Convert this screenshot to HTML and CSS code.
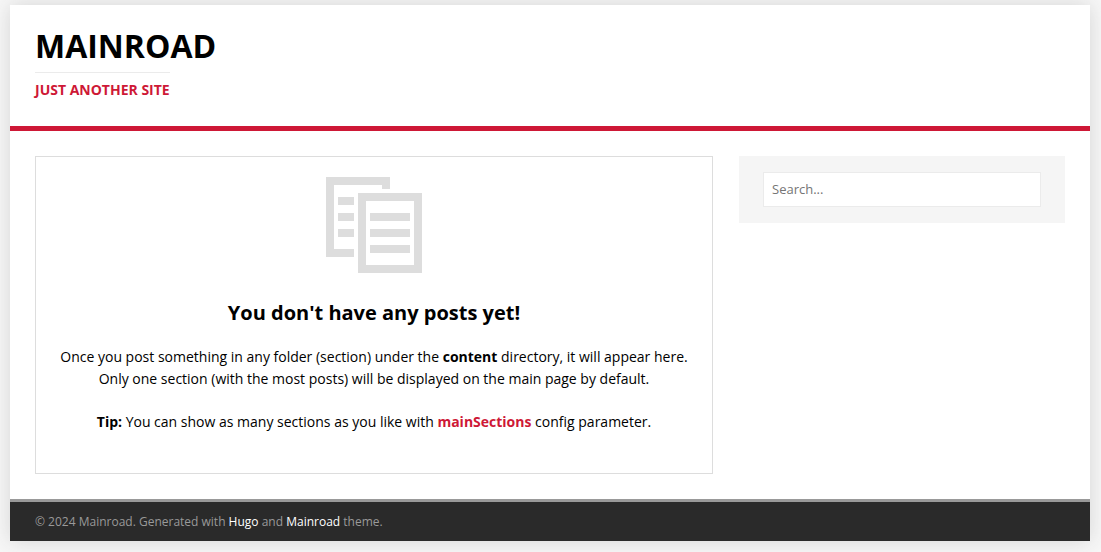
FILE: index.html
```
<!DOCTYPE html>
<html lang="en">
<head>
<meta charset="utf-8">
<meta name="viewport" content="width=device-width, initial-scale=1">
<title>Mainroad</title>
<link rel="stylesheet" href="styles.css">
</head>
<body>
<div class="container">
  <header class="header">
    <a class="logo" href="#">
      <span class="logo-title">Mainroad</span>
      <span class="logo-tagline">Just another site</span>
    </a>
  </header>
  <div class="wrapper">
    <main class="warning">
      <svg class="warning-icon" viewBox="0 0 96 96" width="96" height="96" aria-hidden="true">
        <path d="M0 0h64v12h-8V8H8v64h20v8H0z"/>
        <path d="M12 20h16v8H12zM12 36h16v8H12zM12 52h16v8H12z"/>
        <path fill-rule="evenodd" d="M32 16h64v80H32zM40 24v64h48V24z"/>
        <path d="M44 36h40v8H44zM44 52h40v8H44zM44 68h40v8H44z"/>
      </svg>
      <h2 class="warning-title">You don't have any posts yet!</h2>
      <p class="warning-text">Once you post something in any folder (section) under the <b>content</b> directory, it will appear here.<br>Only one section (with the most posts) will be displayed on the main page by default.</p>
      <p class="warning-text"><b>Tip:</b> You can show as many sections as you like with <a class="warning-link" href="#">mainSections</a> config parameter.</p>
    </main>
    <aside class="sidebar">
      <form class="search" role="search">
        <input class="search-input" type="search" placeholder="Search..." aria-label="Search">
      </form>
    </aside>
  </div>
  <footer class="footer">© 2024 Mainroad. Generated with <a class="footer-link" href="#">Hugo</a> and <a class="footer-link" href="#">Mainroad</a> theme.</footer>
</div>
</body>
</html>
```
FILE: styles.css
```
* {
  box-sizing: border-box;
}

body {
  margin: 0;
  padding: 5px 11px 11px 10px;
  background: #f7f7f7;
  color: #000;
  font: 14px/22px "Open Sans", "Liberation Sans", sans-serif;
}

a {
  text-decoration: none;
}

.container {
  max-width: 1080px;
  margin: 0 auto;
  background: #fff;
  box-shadow: 0 0 20px rgba(50, 50, 50, 0.17);
}

.header {
  padding: 25px;
  border-bottom: 5px solid #ce1836;
}

.logo {
  display: flex;
  flex-direction: column;
  align-items: flex-start;
  font-weight: 700;
  text-transform: uppercase;
}

.logo-title {
  margin-bottom: 10px;
  color: #000;
  font-size: 32px;
  line-height: 32px;
}

.logo-tagline {
  padding-top: 6px;
  border-top: 1px solid #ebebeb;
  color: #ce1836;
}

.wrapper {
  display: grid;
  grid-template-columns: 678fr 326fr;
  align-items: start;
  gap: 26px;
  padding: 25px;
}

.warning {
  padding: 20px;
  border: 1px solid #ddd;
  text-align: center;
}

.warning-icon {
  display: block;
  margin: 0 auto 25px;
  fill: #ddd;
}

.warning-title {
  margin: 0 0 18px;
  font-size: 20px;
  line-height: 30px;
}

.warning-text {
  margin: 0 0 21px;
}

.warning-text:last-child {
  margin-bottom: 20px;
}

.warning-link {
  color: #ce1836;
  font-weight: 700;
}

.search {
  padding: 16px 24px;
  background: #f5f5f5;
}

.search-input {
  display: block;
  width: 100%;
  height: 35px;
  padding: 0 8px 2px;
  border: 1px solid #ebebeb;
  border-radius: 0;
  background: #fff;
  font: 13px "Open Sans", "Liberation Sans", sans-serif;
  appearance: none;
}

.footer {
  padding: 10px 25px;
  border-top: 3px solid #999;
  background: #2a2a2a;
  color: #999;
  font-size: 12px;
  line-height: 19px;
}

.footer-link {
  color: #fff;
}
```
